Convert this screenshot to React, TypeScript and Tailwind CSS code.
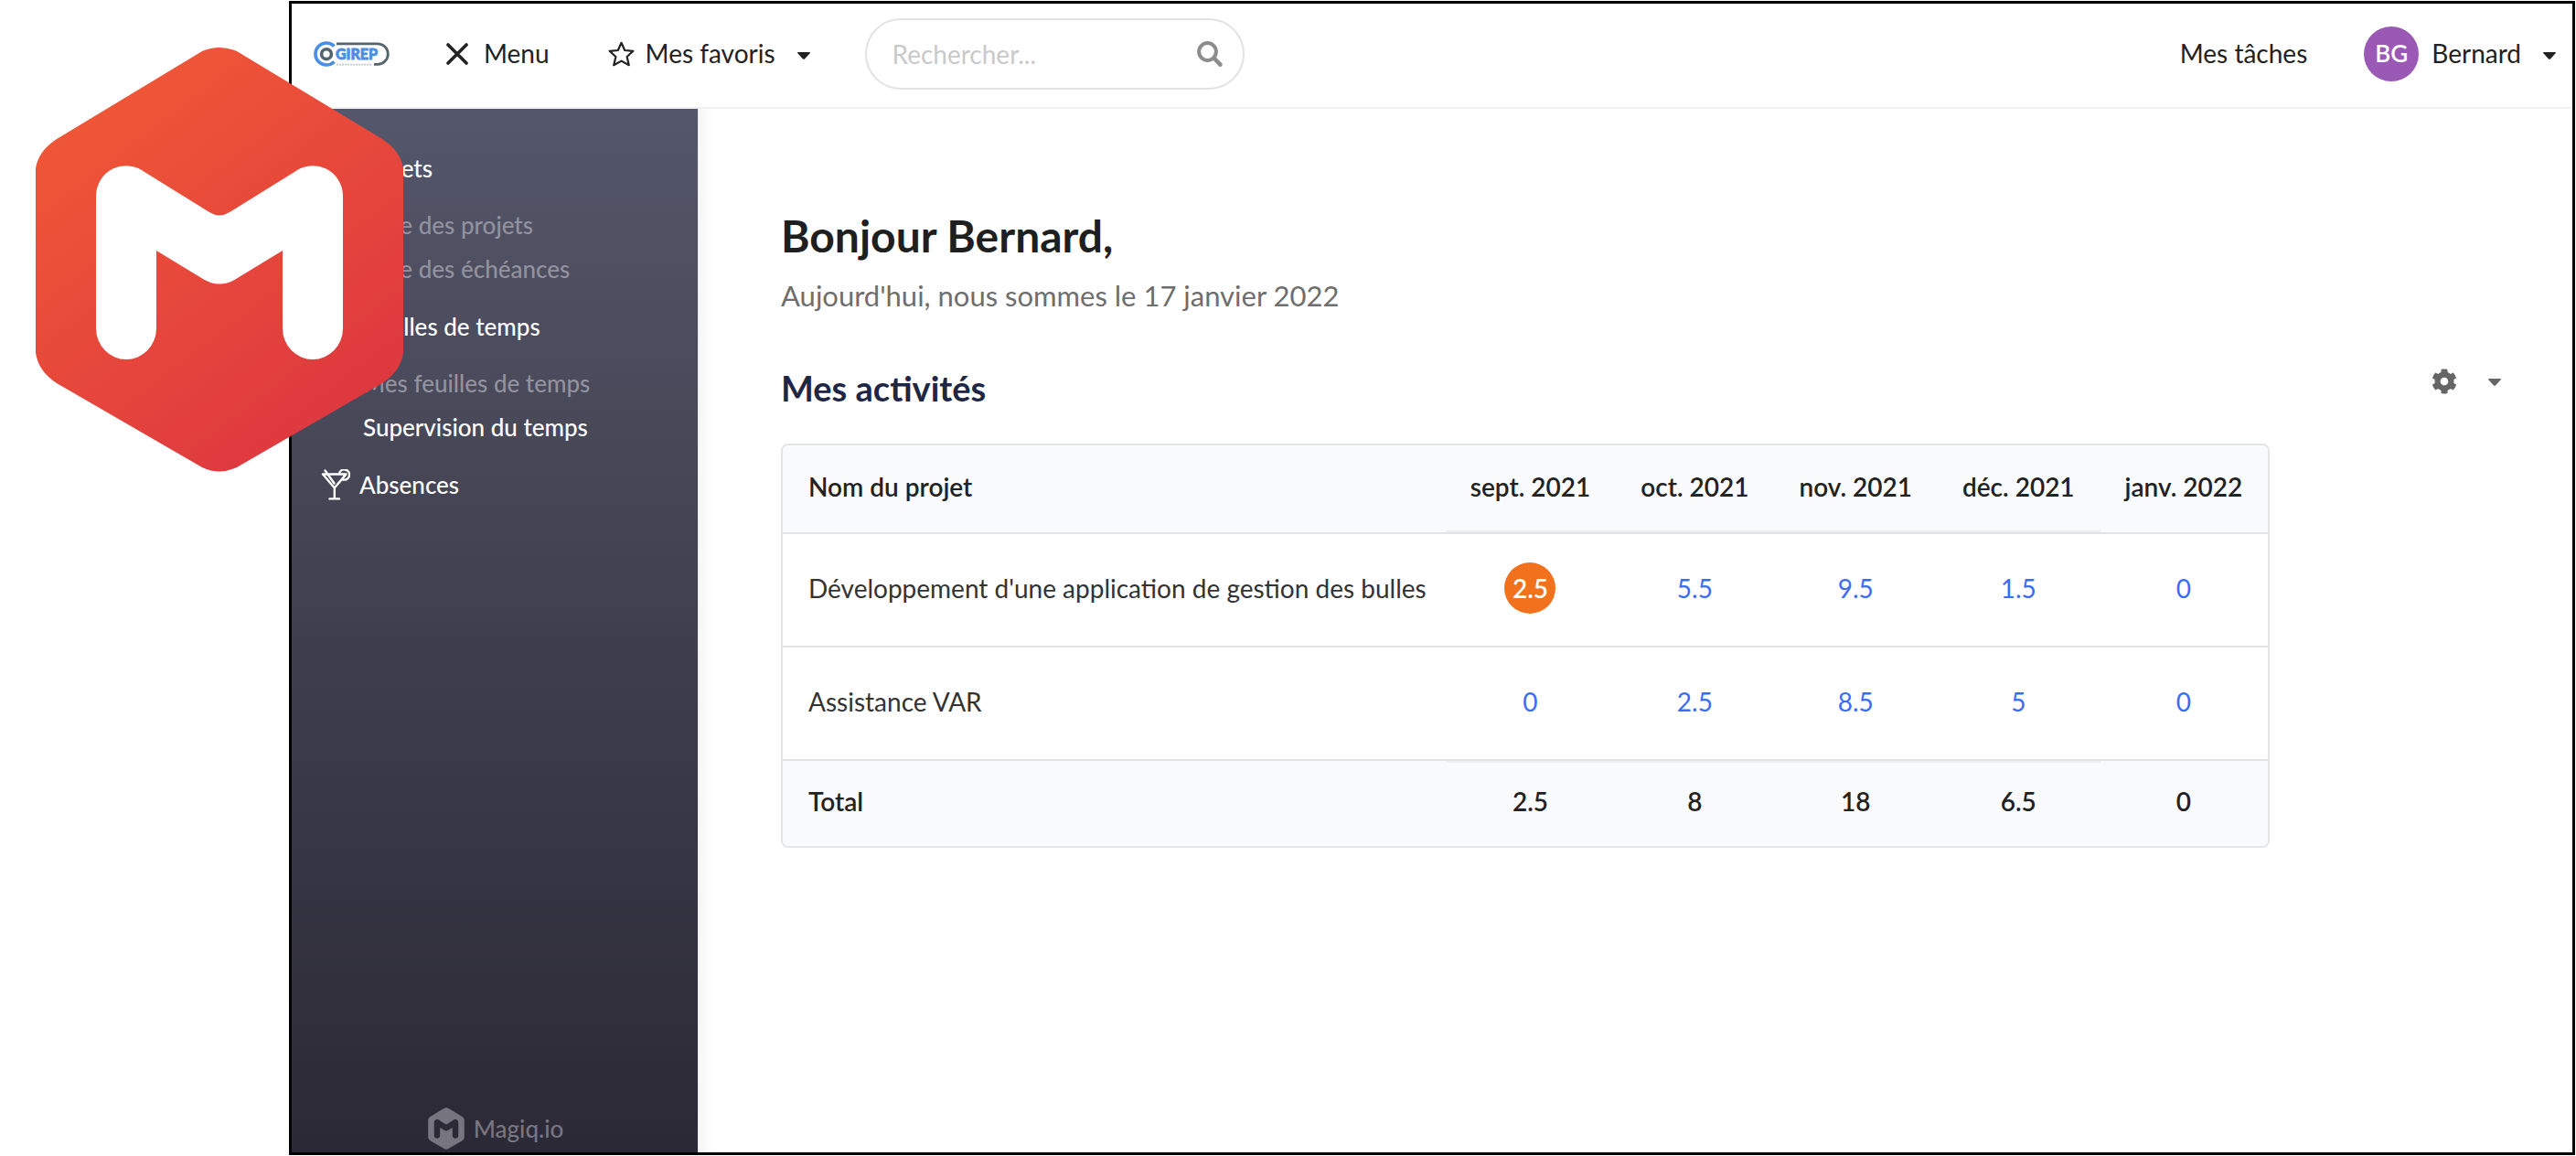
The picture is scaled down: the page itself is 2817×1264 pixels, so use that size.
import React from "react";
import { FaCog, FaFolder, FaClock } from "react-icons/fa";

const months = ["sept. 2021", "oct. 2021", "nov. 2021", "déc. 2021", "janv. 2022"];

const projects = [
  {
    name: "Développement d'une application de gestion des bulles",
    values: ["2.5", "5.5", "9.5", "1.5", "0"],
    alert: 0,
  },
  { name: "Assistance VAR", values: ["0", "2.5", "8.5", "5", "0"], alert: -1 },
];

const totals = ["2.5", "8", "18", "6.5", "0"];

const HEX =
  "M221 56 Q240 48 259 56 L418 152 Q438 165 441 184 L441 386 Q438 406 418 419 L259 511 Q240 520 221 511 L62 419 Q42 406 39 386 L39 184 Q42 165 62 152 Z";
const LETTER =
  "M105 214 A33 33 0 0 1 158 188 L229 232 Q240 239 251 232 L322 188 A33 33 0 0 1 375 214 V359 A33 34 0 0 1 309 359 V274 L258 305 Q240 316 222 305 L171 274 V359 A33 34 0 0 1 105 359 Z";

function MagiqLogo({ className }: { className: string }) {
  return (
    <svg viewBox="38 50 404 468" className={className} aria-hidden="true">
      <defs>
        <linearGradient id="magiq" x1="0.2" y1="0.05" x2="0.8" y2="0.95">
          <stop offset="0" stopColor="#f05836" />
          <stop offset="1" stopColor="#dd3740" />
        </linearGradient>
      </defs>
      <path d={HEX} fill="url(#magiq)" />
      <path d={LETTER} fill="#fff" />
    </svg>
  );
}

function MagiqMark({ className }: { className: string }) {
  return (
    <svg viewBox="38 50 404 468" className={className} aria-hidden="true">
      <path d={HEX + " " + LETTER} fill="currentColor" fillRule="evenodd" />
    </svg>
  );
}

function Ogirep() {
  return (
    <svg viewBox="0 0 84 28" className="h-7 w-[84px]" role="img" aria-label="Ogirep">
      <path d="M25 2.8 H70 A11.3 11.3 0 0 1 70 25.4 H66" fill="none" stroke="#55656e" strokeWidth="2.8" />
      <path d="M22.5 5.6 A12 12 0 1 0 22.5 22.4" fill="none" stroke="#4a8fe2" strokeWidth="3.6" />
      <circle cx="14" cy="14.2" r="5.4" fill="none" stroke="#55656e" strokeWidth="3.6" />
      <text x="24" y="20.4" fontFamily="Lato, sans-serif" fontSize="16" fontWeight="900" fill="#4a8fe2" stroke="#4a8fe2" strokeWidth="0.8">
        GIREP
      </text>
      <path d="M25 25.6 H63" stroke="#c3c8cc" strokeWidth="1.6" strokeDasharray="2 1" />
    </svg>
  );
}

function Cross() {
  return (
    <svg viewBox="0 0 24 24" className="size-6" fill="none" stroke="currentColor" strokeWidth="3.6" strokeLinecap="round" aria-hidden="true">
      <path d="M2 2 L22 22 M22 2 L2 22" />
    </svg>
  );
}

function Star() {
  return (
    <svg viewBox="0 0 29 28" className="h-7 w-[29px]" fill="none" stroke="currentColor" strokeWidth="2.2" strokeLinejoin="round" aria-hidden="true">
      <path d="M14.5 1.8 L18.2 10 L27.4 10.8 L20.6 17 L22.8 26.2 L14.5 21.6 L6.2 26.2 L8.4 17 L1.6 10.8 L10.8 10 Z" />
    </svg>
  );
}

function Caret() {
  return (
    <svg viewBox="0 0 14 8" className="h-2 w-3.5" fill="currentColor" aria-hidden="true">
      <path d="M0.6 0 H13.4 Q14.2 0.4 13.6 1.2 L8 7.4 Q7 8.2 6 7.4 L0.4 1.2 Q-0.2 0.4 0.6 0 Z" />
    </svg>
  );
}

function SearchIcon() {
  return (
    <svg viewBox="0 0 28 28" className="size-7" fill="none" stroke="currentColor" aria-hidden="true">
      <circle cx="11.5" cy="11.5" r="9.4" strokeWidth="4" />
      <path d="M19 19 L25.4 25.6" strokeWidth="4.6" strokeLinecap="round" />
    </svg>
  );
}

function Cocktail() {
  return (
    <svg viewBox="0 0 32 34" className="h-[34px] w-8" fill="none" stroke="currentColor" strokeWidth="2.4" strokeLinejoin="round" strokeLinecap="round" aria-hidden="true">
      <path d="M2 5.5 H27.5 L14.8 20.5 Z M14.8 20.5 V32 M9.5 32.4 H20" />
      <path d="M4.5 1.5 L14.5 15.5" />
      <path d="M20 5 A5.6 5.6 0 1 1 25.5 11.6 H23.5 M25.5 6 V8" />
    </svg>
  );
}

function Section({ icon, label }: { icon: React.ReactNode; label: string }) {
  return (
    <a href="#" className="flex h-[77px] items-center gap-2.5 pl-8 text-white">
      <span className="flex w-8 justify-center">{icon}</span>
      {label}
    </a>
  );
}

function Sub({ label, active }: { label: string; active?: boolean }) {
  return (
    <a href="#" className={"flex h-12 items-center pl-[78px] " + (active ? "text-white" : "text-[#92929e]")}>
      {label}
    </a>
  );
}

/* The four first month columns carry a second, fainter hairline. */
function monthEdge(i: number, place: "head" | "foot") {
  if (i === 4) return "";
  return place === "head" ? "shadow-[inset_0_-2px_0_#eeeff0]" : "shadow-[inset_0_2px_0_#eeeff0]";
}

export default function App() {
  return (
    <div className="relative flex min-h-screen bg-white pt-px pb-px pl-[316px] pr-px font-['Lato',sans-serif] text-[28px] leading-9 text-[#222]">
      <div className="flex flex-1 flex-col border-[3px] border-black">
        <header className="flex h-[115px] items-center border-b-2 border-[#f0f0f0] pr-[18px] pb-1 pl-6">
          <a href="#">
            <Ogirep />
          </a>
          <button type="button" className="ml-[61px] flex items-center gap-[17px]">
            <Cross />
            <span className="pb-0.5">Menu</span>
          </button>
          <button type="button" className="ml-16 flex items-center gap-3">
            <Star />
            <span className="pb-0.5">Mes favoris</span>
            <span className="ml-3 pt-1">
              <Caret />
            </span>
          </button>
          <div className="ml-[60px] flex h-[78px] w-[415px] items-center rounded-full border-2 border-[#e2e2e2] pr-[22px] pl-7">
            <input
              type="text"
              aria-label="Rechercher"
              placeholder="Rechercher..."
              className="w-full min-w-0 flex-1 bg-transparent outline-none placeholder:text-[#c9c9c9]"
            />
            <button type="button" aria-label="Lancer la recherche" className="text-[#8c8c8c]">
              <SearchIcon />
            </button>
          </div>
          <a href="#" className="ml-auto pb-0.5">
            Mes tâches
          </a>
          <button type="button" className="ml-[62px] flex items-center">
            <span className="mr-3.5 flex size-[60px] items-center justify-center rounded-full bg-[#9b59b6] pb-0.5 text-[26px] font-semibold text-white">
              BG
            </span>
            <span className="pb-0.5">Bernard</span>
            <span className="ml-6 pt-1">
              <Caret />
            </span>
          </button>
        </header>

        <div className="flex flex-1">
          <aside className="flex w-[444px] flex-col bg-linear-to-b from-[#54576a] via-[#403f4e] to-[#2b2935] pt-[26px] text-[26px] font-medium">
            <nav aria-label="Navigation principale">
              <Section icon={<FaFolder />} label="Projets" />
              <Sub label="Liste des projets" />
              <Sub label="Liste des échéances" />
              <Section icon={<FaClock />} label="Feuilles de temps" />
              <Sub label="Mes feuilles de temps" />
              <Sub label="Supervision du temps" active />
              <Section icon={<Cocktail />} label="Absences" />
            </nav>
            <a href="#" className="mt-auto mb-[3px] flex items-center justify-center gap-2.5 pl-0.5 text-[#777580]">
              <MagiqMark className="h-[46px] w-10" />
              Magiq.io
            </a>
          </aside>

          <main className="flex-1 border-l border-[#e8e8ea] pt-[106px] pr-[78px] pl-[90px] shadow-[inset_24px_0_20px_-20px_rgba(0,0,0,0.06)]">
            <h1 className="text-[48px] leading-[66px] font-bold text-[#1f1f1f]">Bonjour Bernard,</h1>
            <p className="mt-2 text-[31px] leading-12 text-[#6e6e6e]">Aujourd'hui, nous sommes le 17 janvier 2022</p>

            <div className="mt-[50px] flex items-start justify-between">
              <h2 className="text-[38px] leading-[54px] font-bold text-[#1e2746]">Mes activités</h2>
              <button type="button" aria-label="Paramètres" className="flex h-10 items-center gap-[34px] text-[#666]">
                <FaCog className="size-7" />
                <span className="pt-0.5">
                  <Caret />
                </span>
              </button>
            </div>

            <div className="mt-[34px] w-fit overflow-hidden rounded-lg border-2 border-[#e4e5e6]">
              <table className="border-collapse">
                <thead>
                  <tr className="h-[96px] border-b-2 border-[#e2e3e4] bg-[#f9fafc]">
                    <th className="pr-[21px] pb-1.5 pl-7 text-left font-semibold">Nom du projet</th>
                    {months.map((m, i) => (
                      <th key={m} className={"pr-7 pb-1.5 pl-[27px] text-center font-semibold " + monthEdge(i, "head")}>
                        {m}
                      </th>
                    ))}
                  </tr>
                </thead>
                <tbody className="text-[#333]">
                  {projects.map((p) => (
                    <tr key={p.name} className="h-[124px] border-b-2 border-[#e2e4e5]">
                      <td className="pr-[21px] pb-1 pl-7">{p.name}</td>
                      {p.values.map((v, i) => (
                        <td key={i} className="pr-7 pb-1 pl-[27px] text-center">
                          <a
                            href="#"
                            className={
                              i === p.alert
                                ? "inline-flex size-14 items-center justify-center rounded-full bg-[#f2711c] font-semibold text-white"
                                : "text-[#3b6cf8]"
                            }
                          >
                            {v}
                          </a>
                        </td>
                      ))}
                    </tr>
                  ))}
                </tbody>
                <tfoot>
                  <tr className="h-[94px] bg-[#f9fafc] font-semibold">
                    <th className="pr-[21px] pb-1.5 pl-7 text-left font-semibold">Total</th>
                    {totals.map((t, i) => (
                      <td key={i} className={"pr-7 pb-1.5 pl-[27px] text-center " + monthEdge(i, "foot")}>
                        {t}
                      </td>
                    ))}
                  </tr>
                </tfoot>
              </table>
            </div>
          </main>
        </div>
      </div>
      <MagiqLogo className="absolute top-[50px] left-[38px] h-[468px] w-[404px]" />
    </div>
  );
}
